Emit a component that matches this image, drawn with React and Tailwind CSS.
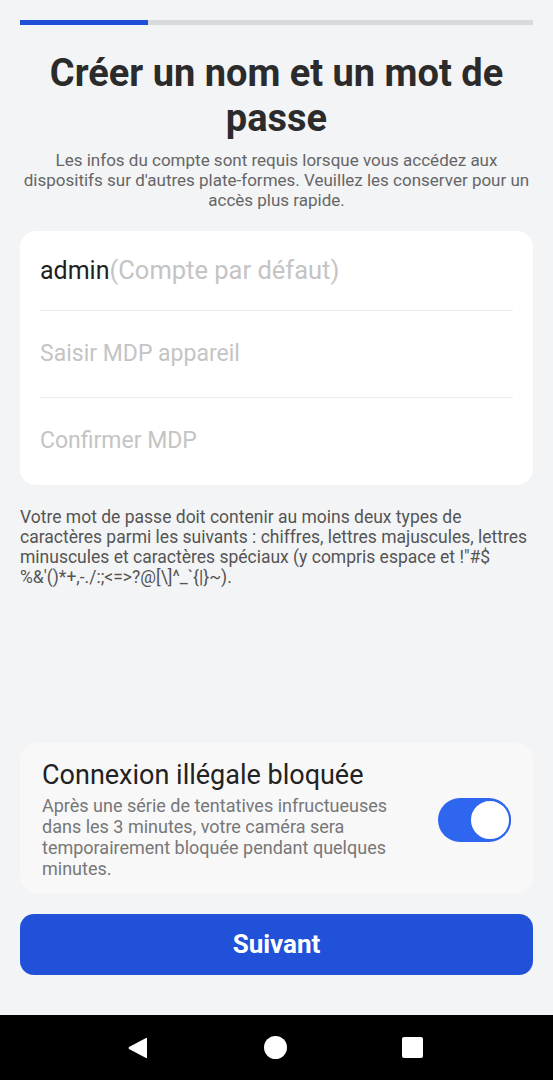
import React, { useState } from 'react';

function Toggle({ on, onChange }) {
    return (
        <button
            onClick={() => onChange(!on)}
            className={`relative shrink-0 w-[73px] h-[44px] rounded-full flex items-center ${on ? 'bg-[#2f66ef] justify-end' : 'bg-gray-300 justify-start'}`}
        >
            <span className="w-[42px] h-[42px] rounded-full bg-white border-2 border-[#2f66ef]" />
        </button>
    );
}

export default function App() {
    const [blocked, setBlocked] = useState(true);

    return (
        <div
            className="w-[553px] h-[1080px] bg-[#f3f4f6] flex flex-col"
            style={{ fontFamily: 'Roboto, "Noto Sans", sans-serif' }}
        >
            <div className="flex-1 flex flex-col px-[20px]">
                {/* Progress */}
                <div className="mt-[20px] h-[5px] bg-[#d9dadc] flex">
                    <div className="w-[128px] bg-[#1f4fd6]" />
                </div>

                {/* Header */}
                <h1 className="mt-[26px] text-center text-[38px] leading-[45px] font-bold text-[#2b2b2b]">
                    Créer un nom et un mot de passe
                </h1>
                <p className="mt-[9px] text-center text-[17px] leading-[20px] text-[#666666]">
                    Les infos du compte sont requis lorsque vous accédez aux dispositifs sur d'autres plate-formes. Veuillez les conserver pour un accès plus rapide.
                </p>

                {/* Form card */}
                <div className="mt-[21px] bg-white rounded-[16px] px-[20px]">
                    <div className="h-[80px] flex items-center border-b border-[#ececec] text-[25px]">
                        <span className="text-[#1f1f1f]">admin</span>
                        <span className="text-[#c4c4c4] text-[25.5px]">(Compte par défaut)</span>
                    </div>
                    <div className="h-[87px] flex items-center border-b border-[#ececec]">
                        <input
                            type="password"
                            placeholder="Saisir MDP appareil"
                            className="w-full bg-transparent outline-none text-[23px] placeholder:text-[#c4c4c4]"
                        />
                    </div>
                    <div className="h-[87px] flex items-center">
                        <input
                            type="password"
                            placeholder="Confirmer MDP"
                            className="w-full bg-transparent outline-none text-[23px] placeholder:text-[#c4c4c4]"
                        />
                    </div>
                </div>

                <p className="mt-[22px] text-[17.5px] leading-[20px] text-[#555555]">
                    Votre mot de passe doit contenir au moins deux types de caractères parmi les suivants : chiffres, lettres majuscules, lettres minuscules et caractères spéciaux (y compris espace et !"#$ %&'()*+,-./:;&lt;=&gt;?@[\]^_`{'{'}|{'}'}~).
                </p>

                <div className="flex-1" />

                {/* Illegal login card */}
                <div className="bg-[#f8f8f9] rounded-[16px] pl-[22px] pr-[22px] pt-[17px] pb-[14px] flex items-center justify-between">
                    <div className="w-[355px]">
                        <div className="text-[27px] leading-[30px] text-[#222222]">Connexion illégale bloquée</div>
                        <p className="mt-[5px] text-[18px] leading-[21px] text-[#777777]">
                            Après une série de tentatives infructueuses dans les 3 minutes, votre caméra sera temporairement bloquée pendant quelques minutes.
                        </p>
                    </div>
                    <Toggle on={blocked} onChange={setBlocked} />
                </div>

                <button className="mt-[21px] mb-[40px] h-[61px] rounded-[14px] bg-[#2251d9] text-white text-[26px] font-bold">
                    Suivant
                </button>
            </div>

            {/* Android nav bar */}
            <div className="h-[65px] bg-black flex items-center justify-center gap-[115px]">
                <svg width="22" height="22" viewBox="0 0 22 22" className="-ml-[3px]">
                    <path d="M20 1.5 L20 20.5 Q20 21.5 19 21 L2 12 Q1 11 2 10 L19 1 Q20 0.5 20 1.5 Z" fill="white" />
                </svg>
                <div className="w-[23px] h-[23px] rounded-full bg-white" />
                <div className="w-[21px] h-[21px] rounded-[2px] bg-white" />
            </div>
        </div>
    );
}
